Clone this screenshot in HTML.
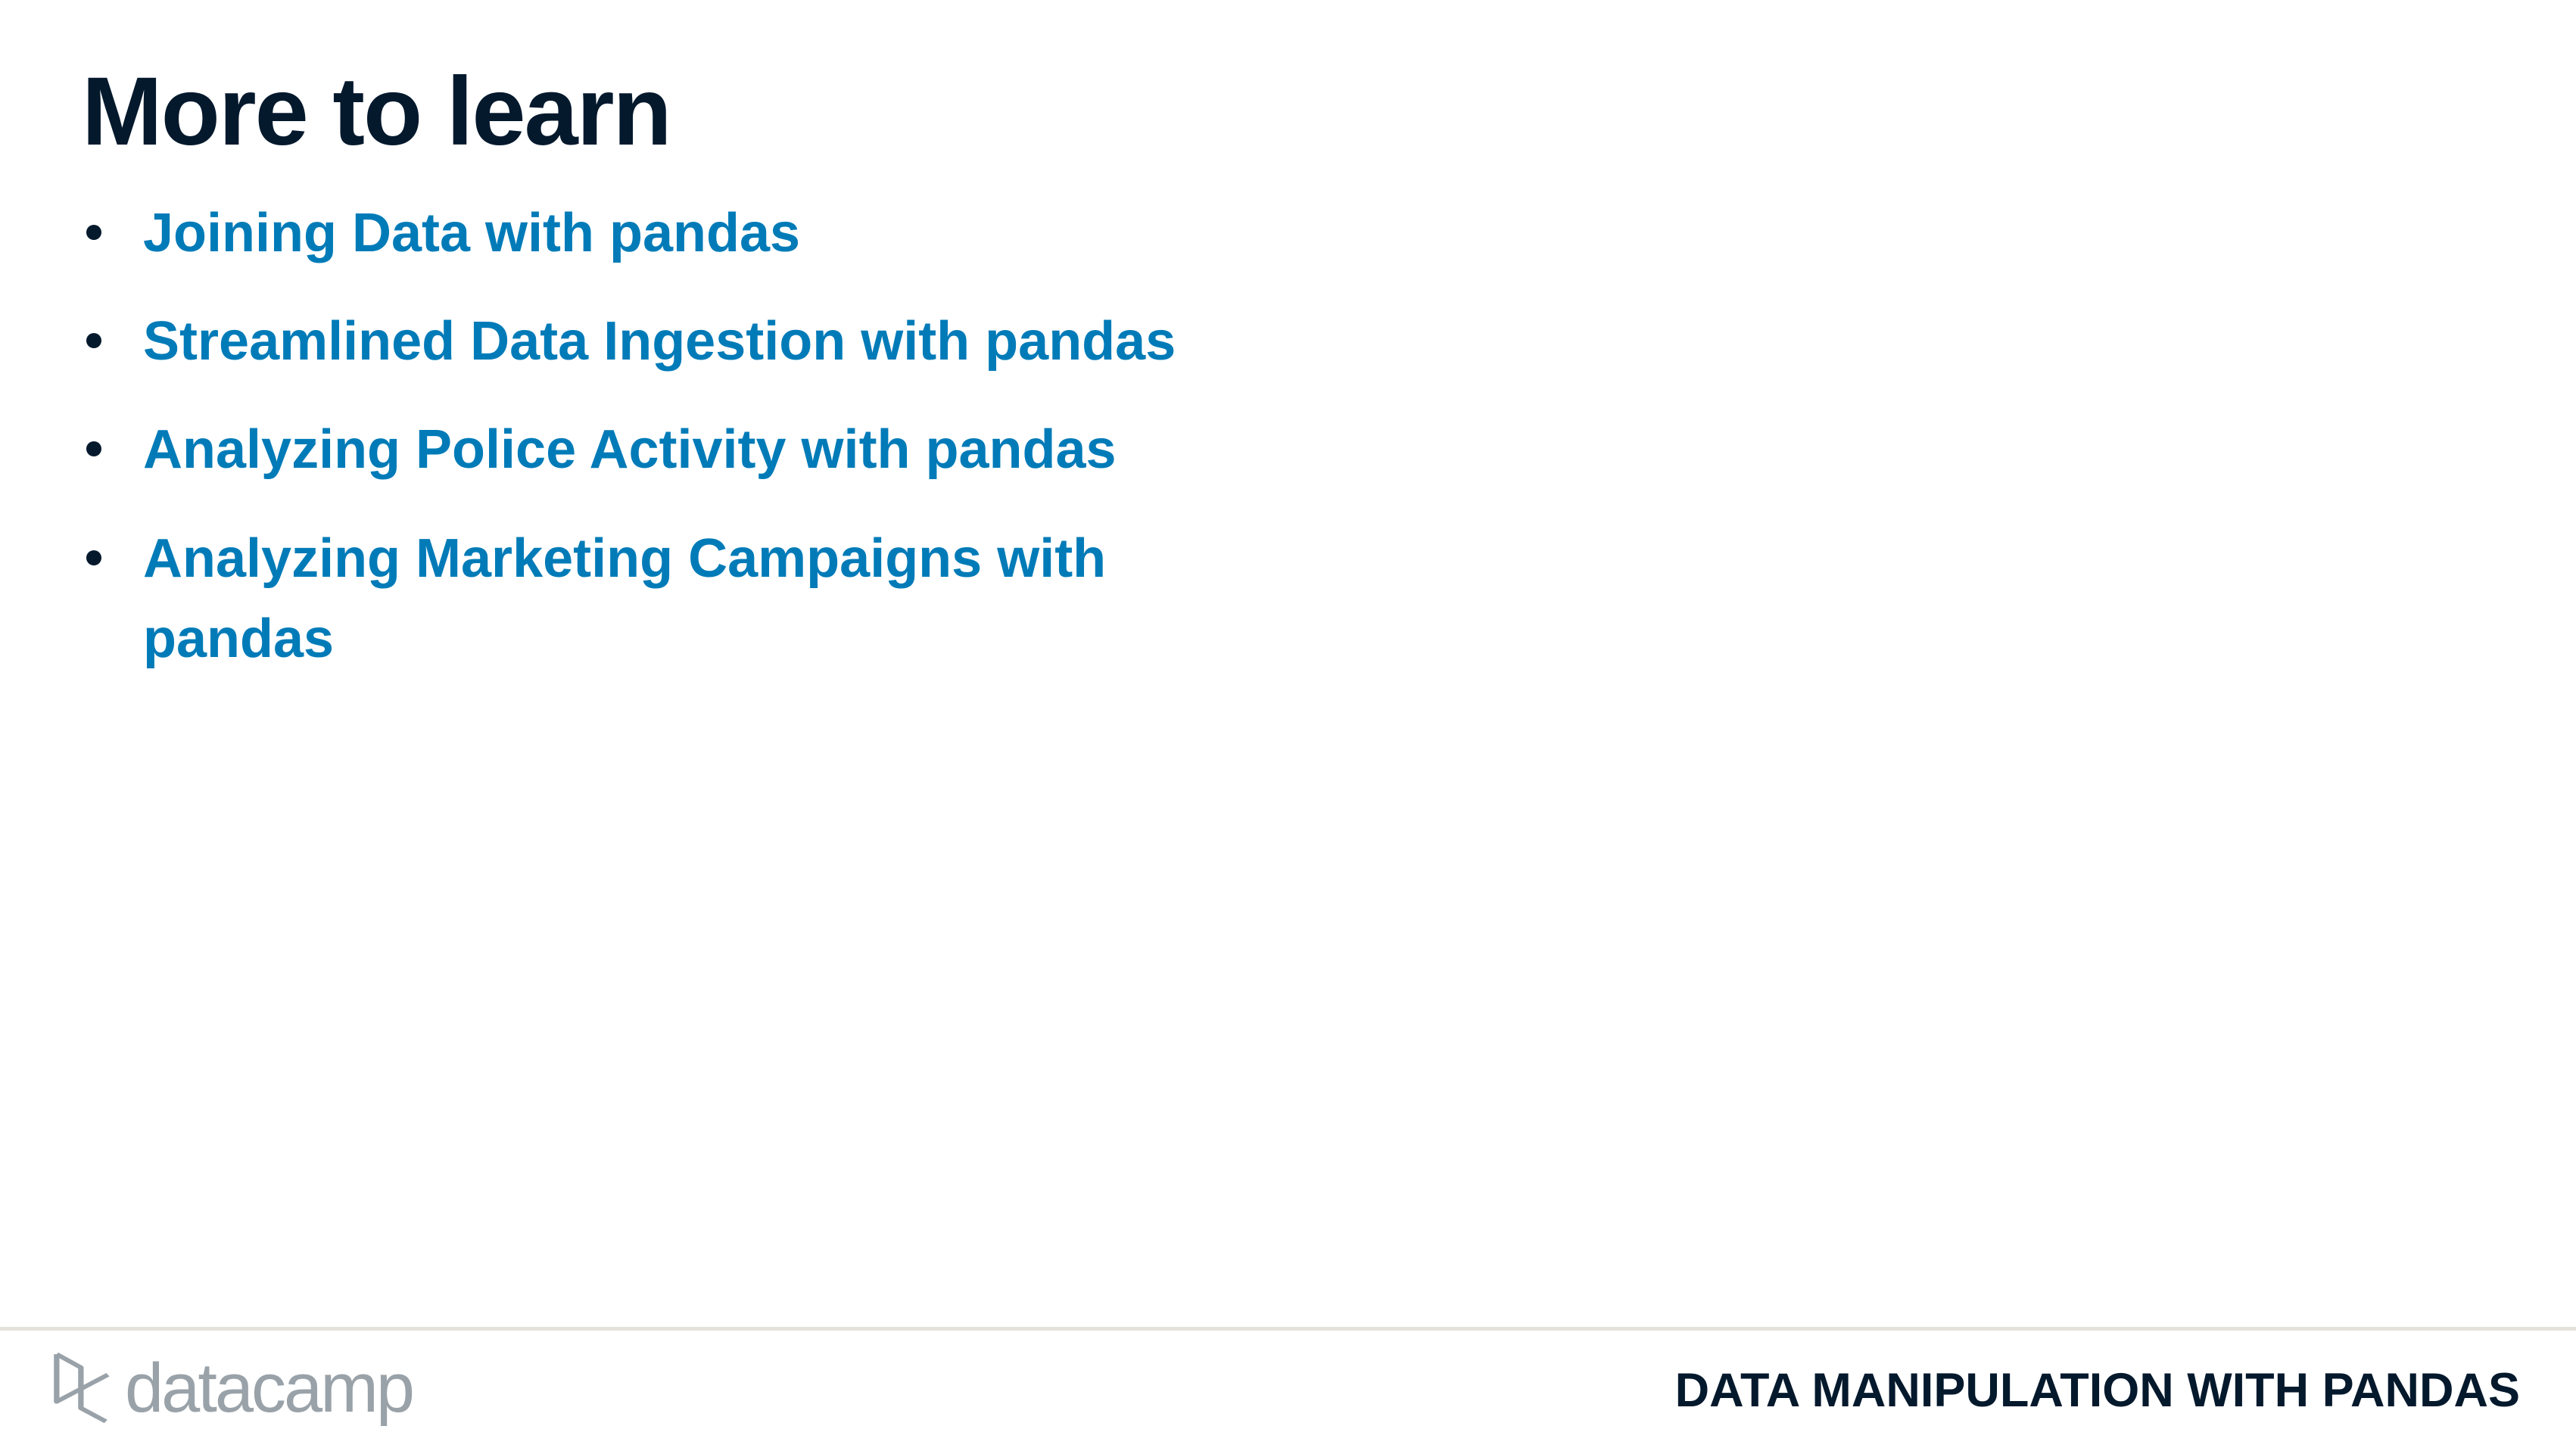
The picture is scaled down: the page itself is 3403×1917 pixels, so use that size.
<!DOCTYPE html>
<html><head><meta charset="utf-8"><style>
html,body{margin:0;padding:0;background:#fff;}
body{width:3403px;height:1917px;position:relative;overflow:hidden;font-family:"Liberation Sans",sans-serif;}
.t{position:absolute;left:108px;top:84px;font-size:128px;font-weight:bold;color:#05192d;letter-spacing:-2px;line-height:1;}
.it{position:absolute;left:189px;font-size:72px;font-weight:bold;color:#007bb8;line-height:106px;}
.dot{position:absolute;left:114px;width:20px;height:20px;border-radius:50%;background:#05192d;}
.line{position:absolute;left:0;top:1753px;width:3403px;height:5px;background:#e5e2dd;}
.ft{position:absolute;right:74px;top:1806px;font-size:63px;font-weight:bold;color:#05192d;line-height:1;}
.logo{position:absolute;left:165px;top:1788px;font-size:92px;color:#9aa2a9;letter-spacing:-3px;line-height:1;}
</style></head><body>
<div class="t">More to learn</div>
<div class="dot" style="top:297px"></div><div class="it" style="top:255px">Joining Data with pandas</div>
<div class="dot" style="top:440px"></div><div class="it" style="top:398px">Streamlined Data Ingestion with pandas</div>
<div class="dot" style="top:583px"></div><div class="it" style="top:541px">Analyzing Police Activity with pandas</div>
<div class="dot" style="top:727px"></div><div class="it" style="top:685px">Analyzing Marketing Campaigns with<br>pandas</div>
<div class="line"></div>
<svg style="position:absolute;left:68px;top:1784px" width="80" height="100" viewBox="155 195 175 295" preserveAspectRatio="none">
<path d="M170 210 L240 262 L240 420 L312 472 M170 210 L170 395 L318 290" fill="none" stroke="#9aa2a9" stroke-width="16" stroke-linejoin="round"/>
</svg>
<div class="logo">datacamp</div>
<div class="ft">DATA MANIPULATION WITH PANDAS</div>
</body></html>
